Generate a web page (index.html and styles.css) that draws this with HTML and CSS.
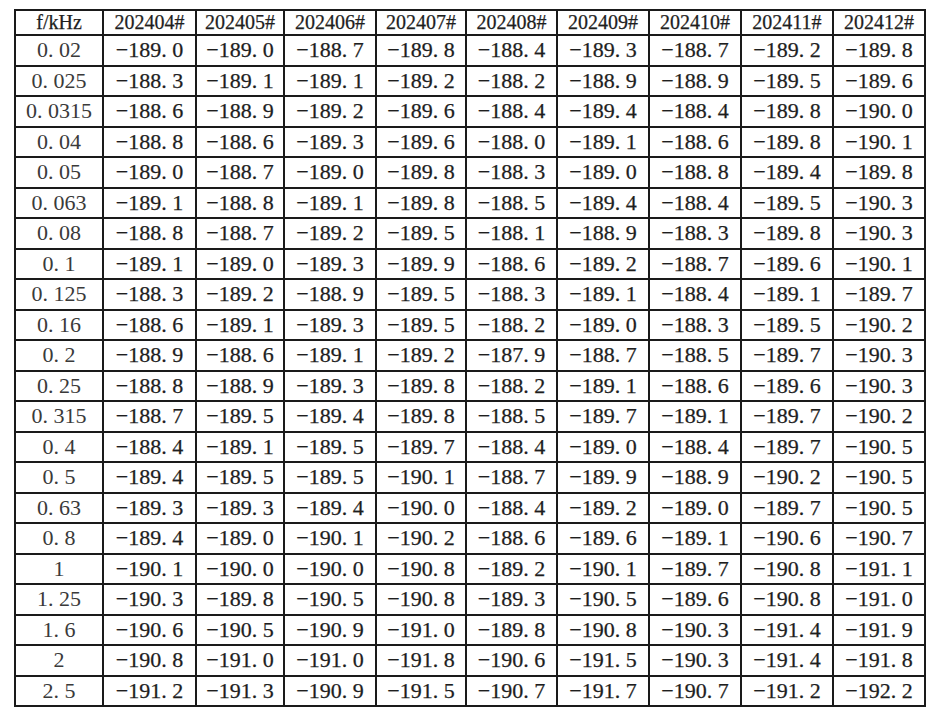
FILE: index.html
```html
<!DOCTYPE html>
<html lang="zh-CN">
<head>
<meta charset="utf-8">
<title>f/kHz 数据表</title>
<link rel="stylesheet" href="styles.css">
</head>
<body>
<div class="page">
<table class="data">
<colgroup>
<col class="c0"><col class="c1"><col class="c2"><col class="c3"><col class="c4"><col class="c5"><col class="c6"><col class="c7"><col class="c8"><col class="c9">
</colgroup>
<thead>
<tr><th>f/kHz</th><th>202404#</th><th>202405#</th><th>202406#</th><th>202407#</th><th>202408#</th><th>202409#</th><th>202410#</th><th>202411#</th><th>202412#</th></tr>
</thead>
<tbody>
<tr><td class="f">0. 02</td><td>−189. 0</td><td>−189. 0</td><td>−188. 7</td><td>−189. 8</td><td>−188. 4</td><td>−189. 3</td><td>−188. 7</td><td>−189. 2</td><td>−189. 8</td></tr>
<tr><td class="f">0. 025</td><td>−188. 3</td><td>−189. 1</td><td>−189. 1</td><td>−189. 2</td><td>−188. 2</td><td>−188. 9</td><td>−188. 9</td><td>−189. 5</td><td>−189. 6</td></tr>
<tr><td class="f">0. 0315</td><td>−188. 6</td><td>−188. 9</td><td>−189. 2</td><td>−189. 6</td><td>−188. 4</td><td>−189. 4</td><td>−188. 4</td><td>−189. 8</td><td>−190. 0</td></tr>
<tr><td class="f">0. 04</td><td>−188. 8</td><td>−188. 6</td><td>−189. 3</td><td>−189. 6</td><td>−188. 0</td><td>−189. 1</td><td>−188. 6</td><td>−189. 8</td><td>−190. 1</td></tr>
<tr><td class="f">0. 05</td><td>−189. 0</td><td>−188. 7</td><td>−189. 0</td><td>−189. 8</td><td>−188. 3</td><td>−189. 0</td><td>−188. 8</td><td>−189. 4</td><td>−189. 8</td></tr>
<tr><td class="f">0. 063</td><td>−189. 1</td><td>−188. 8</td><td>−189. 1</td><td>−189. 8</td><td>−188. 5</td><td>−189. 4</td><td>−188. 4</td><td>−189. 5</td><td>−190. 3</td></tr>
<tr><td class="f">0. 08</td><td>−188. 8</td><td>−188. 7</td><td>−189. 2</td><td>−189. 5</td><td>−188. 1</td><td>−188. 9</td><td>−188. 3</td><td>−189. 8</td><td>−190. 3</td></tr>
<tr><td class="f">0. 1</td><td>−189. 1</td><td>−189. 0</td><td>−189. 3</td><td>−189. 9</td><td>−188. 6</td><td>−189. 2</td><td>−188. 7</td><td>−189. 6</td><td>−190. 1</td></tr>
<tr><td class="f">0. 125</td><td>−188. 3</td><td>−189. 2</td><td>−188. 9</td><td>−189. 5</td><td>−188. 3</td><td>−189. 1</td><td>−188. 4</td><td>−189. 1</td><td>−189. 7</td></tr>
<tr><td class="f">0. 16</td><td>−188. 6</td><td>−189. 1</td><td>−189. 3</td><td>−189. 5</td><td>−188. 2</td><td>−189. 0</td><td>−188. 3</td><td>−189. 5</td><td>−190. 2</td></tr>
<tr><td class="f">0. 2</td><td>−188. 9</td><td>−188. 6</td><td>−189. 1</td><td>−189. 2</td><td>−187. 9</td><td>−188. 7</td><td>−188. 5</td><td>−189. 7</td><td>−190. 3</td></tr>
<tr><td class="f">0. 25</td><td>−188. 8</td><td>−188. 9</td><td>−189. 3</td><td>−189. 8</td><td>−188. 2</td><td>−189. 1</td><td>−188. 6</td><td>−189. 6</td><td>−190. 3</td></tr>
<tr><td class="f">0. 315</td><td>−188. 7</td><td>−189. 5</td><td>−189. 4</td><td>−189. 8</td><td>−188. 5</td><td>−189. 7</td><td>−189. 1</td><td>−189. 7</td><td>−190. 2</td></tr>
<tr><td class="f">0. 4</td><td>−188. 4</td><td>−189. 1</td><td>−189. 5</td><td>−189. 7</td><td>−188. 4</td><td>−189. 0</td><td>−188. 4</td><td>−189. 7</td><td>−190. 5</td></tr>
<tr><td class="f">0. 5</td><td>−189. 4</td><td>−189. 5</td><td>−189. 5</td><td>−190. 1</td><td>−188. 7</td><td>−189. 9</td><td>−188. 9</td><td>−190. 2</td><td>−190. 5</td></tr>
<tr><td class="f">0. 63</td><td>−189. 3</td><td>−189. 3</td><td>−189. 4</td><td>−190. 0</td><td>−188. 4</td><td>−189. 2</td><td>−189. 0</td><td>−189. 7</td><td>−190. 5</td></tr>
<tr><td class="f">0. 8</td><td>−189. 4</td><td>−189. 0</td><td>−190. 1</td><td>−190. 2</td><td>−188. 6</td><td>−189. 6</td><td>−189. 1</td><td>−190. 6</td><td>−190. 7</td></tr>
<tr><td class="f">1</td><td>−190. 1</td><td>−190. 0</td><td>−190. 0</td><td>−190. 8</td><td>−189. 2</td><td>−190. 1</td><td>−189. 7</td><td>−190. 8</td><td>−191. 1</td></tr>
<tr><td class="f">1. 25</td><td>−190. 3</td><td>−189. 8</td><td>−190. 5</td><td>−190. 8</td><td>−189. 3</td><td>−190. 5</td><td>−189. 6</td><td>−190. 8</td><td>−191. 0</td></tr>
<tr><td class="f">1. 6</td><td>−190. 6</td><td>−190. 5</td><td>−190. 9</td><td>−191. 0</td><td>−189. 8</td><td>−190. 8</td><td>−190. 3</td><td>−191. 4</td><td>−191. 9</td></tr>
<tr><td class="f">2</td><td>−190. 8</td><td>−191. 0</td><td>−191. 0</td><td>−191. 8</td><td>−190. 6</td><td>−191. 5</td><td>−190. 3</td><td>−191. 4</td><td>−191. 8</td></tr>
<tr><td class="f">2. 5</td><td>−191. 2</td><td>−191. 3</td><td>−190. 9</td><td>−191. 5</td><td>−190. 7</td><td>−191. 7</td><td>−190. 7</td><td>−191. 2</td><td>−192. 2</td></tr>
</tbody>
</table>
</div>
</body>
</html>
```
FILE: styles.css
```css
html, body {
  margin: 0;
  padding: 0;
  background: #ffffff;
}
.page {
  padding: 9px 0 0 14px;
}
.data {
  border-collapse: collapse;
  table-layout: fixed;
  width: 910px;
  height: 698px;
  font-family: "Liberation Serif", "Noto Sans CJK SC", serif;
  color: #1e1e1e;
}
.data th, .data td {
  border: 2px solid #1a1a1a;
  text-align: center;
  vertical-align: middle;
  padding: 0;
  white-space: nowrap;
  -webkit-text-stroke: 0.25px #1e1e1e;
}
.data th {
  font-weight: normal;
  font-size: 20px;
}
.data td {
  font-size: 22px;
}
.data td.f {
  color: #3a3a3a;
  -webkit-text-stroke: 0;
}
.c0 { width: 88px; }
.c1 { width: 93px; }
.c2 { width: 88px; }
.c3 { width: 92px; }
.c4 { width: 90px; }
.c5 { width: 91px; }
.c6 { width: 92px; }
.c7 { width: 92px; }
.c8 { width: 92px; }
.c9 { width: 92px; }
```
